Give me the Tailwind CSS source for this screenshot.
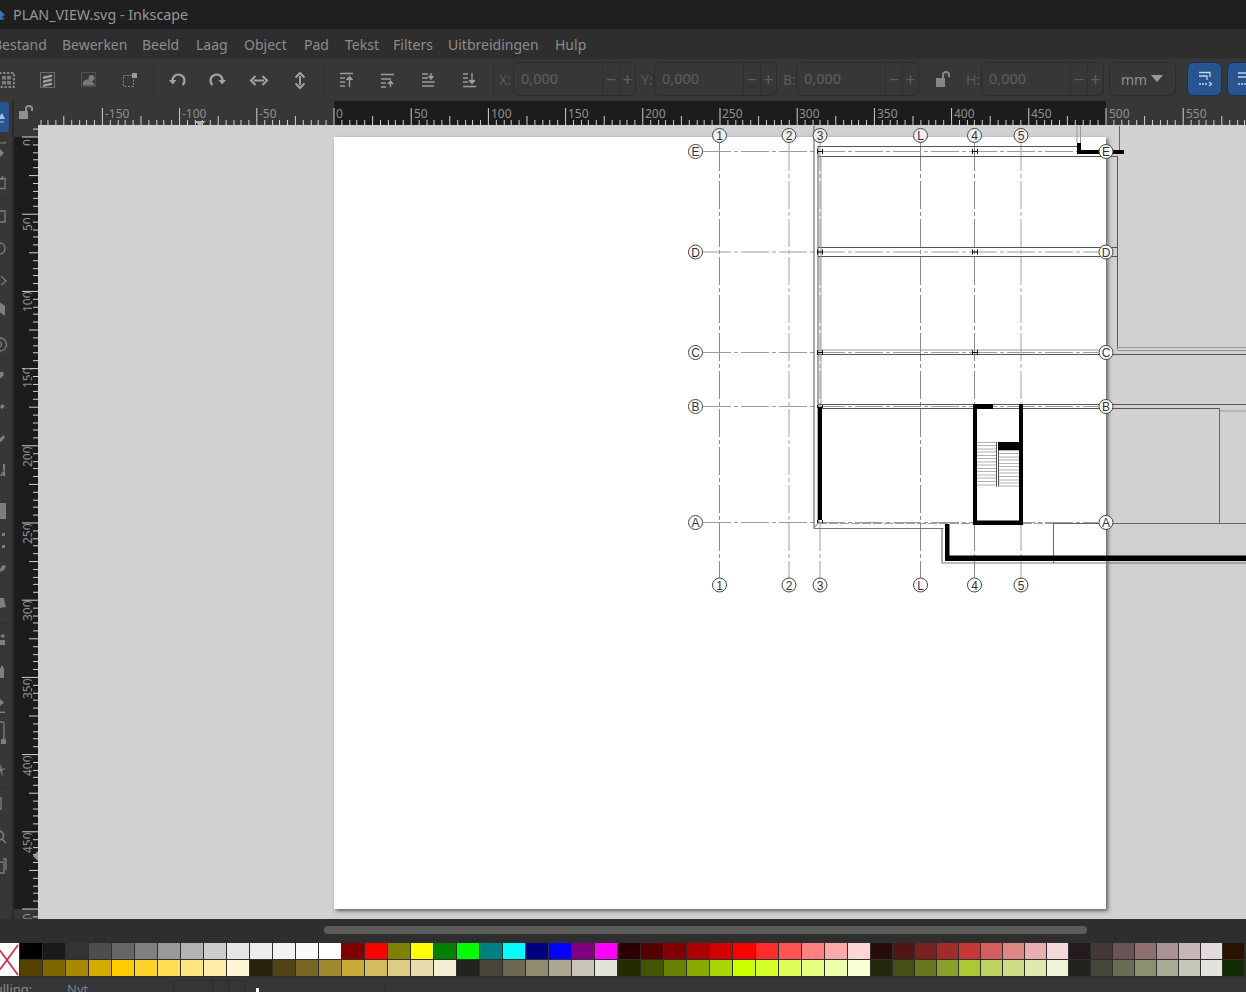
<!DOCTYPE html>
<html lang="nl"><head><meta charset="utf-8"><title>PLAN_VIEW.svg - Inkscape</title>
<script src="https://cdn.jsdelivr.net/npm/@tailwindcss/browser@4"></script></head>
<body class="m-0 bg-[#2e2e2e]">
<div class="w-[1246px] h-[992px] overflow-hidden flex flex-col font-['Noto_Sans','Open_Sans',sans-serif] text-[#8c8c8c]">

<!-- title bar -->
<div class="h-[29px] shrink-0 bg-[#1f1f1f] flex items-center relative">
  <svg class="w-[6px] h-[12px] ml-0 mt-[1px]" viewBox="0 0 6 12"><path d="M0 1 L5 6 L2 8 L5 10 L0 11Z" fill="#3f6ea8"/></svg>
  <span class="ml-[7px] mt-[2px] text-[14.300px] text-[#979797] leading-none">PLAN_VIEW.svg - Inkscape</span>
</div>

<!-- menu -->
<div class="h-[29px] shrink-0 bg-[#2e2e2e] flex items-center text-[14px] text-[#8c8c8c] leading-none pt-[2px]">
  <span class="w-[69px] shrink-0 -ml-[7px]">Bestand</span>
  <span class="w-[80px] shrink-0">Bewerken</span>
  <span class="w-[54px] shrink-0">Beeld</span>
  <span class="w-[48px] shrink-0">Laag</span>
  <span class="w-[60px] shrink-0">Object</span>
  <span class="w-[41px] shrink-0">Pad</span>
  <span class="w-[48px] shrink-0">Tekst</span>
  <span class="w-[55px] shrink-0">Filters</span>
  <span class="w-[107px] shrink-0">Uitbreidingen</span>
  <span>Hulp</span>
</div>

<!-- toolbar -->
<div class="h-[43px] shrink-0 bg-[#373737] border-t border-[#333] relative flex items-center">
  <svg class="w-[498px] h-[43px] shrink-0" viewBox="0 58 498 43" fill="none">
    <g stroke="#2f2f2f"><path d="M153.500 63V96M323.500 63V96M493.500 63V96"/></g>
    <!-- select all -->
    <rect x="-1" y="72" width="15" height="14" stroke="#a0a0a0" stroke-width="1.400" stroke-dasharray="2.500 1.500"/>
    <path d="M2 75h4v3.500h-4zM7 75h4v3.500h-4zM2 80h4v3.500h-4zM7 80h4v3.500h-4z" fill="#7d7d7d"/>
    <!-- select all layers -->
    <rect x="40.500" y="71.500" width="14" height="15" stroke="#a0a0a0" stroke-dasharray="1 1"/>
    <path d="M43 75.500L52 73.500V76L43 78ZM43 79.500L52 77.500V80L43 82ZM43 83.500L52 81.500V84L43 86Z" fill="#9d9d9d"/>
    <!-- deselect -->
    <rect x="81.500" y="71.500" width="14" height="14" stroke="#666" stroke-dasharray="1 1"/>
    <path d="M83 83a5 4 0 0 1 9-3l3 4.500H83Z" fill="#777"/><circle cx="91.500" cy="77" r="3" fill="#7a7a7a"/>
    <!-- select same -->
    <rect x="123.500" y="74.500" width="10" height="11" stroke="#8a8a8a" stroke-dasharray="2 1.500"/>
    <rect x="132" y="72" width="5" height="5" fill="#9a9a9a"/>
    <!-- rotate ccw -->
    <path d="M172.500 80a6 6 0 1 1 10 4" stroke="#a3a3a3" stroke-width="2.200"/>
    <path d="M169 79h7.500l-3.700 4.500Z" fill="#a3a3a3"/>
    <!-- rotate cw -->
    <path d="M222.500 80a6 6 0 1 0 -10 4" stroke="#a3a3a3" stroke-width="2.200"/>
    <path d="M226 79h-7.500l3.700 4.500Z" fill="#a3a3a3"/>
    <!-- flip h -->
    <path d="M254 79.500H264" stroke="#a3a3a3" stroke-width="2"/>
    <path d="M255.500 75l-4.500 4.500 4.500 4.500M262.500 75l4.500 4.500-4.500 4.500" stroke="#a3a3a3" stroke-width="2"/>
    <!-- flip v -->
    <path d="M300 75V84" stroke="#a3a3a3" stroke-width="2"/>
    <path d="M295.500 76.500l4.500-4.500 4.500 4.500M295.500 82.500l4.500 4.500 4.500-4.500" stroke="#a3a3a3" stroke-width="2"/>
    <!-- raise / lower -->
    <g stroke="#9b9b9b" stroke-width="1.400">
      <path d="M340 72.500H353M340 77H345M340 81H345M340 85H345M349.500 86V76"/>
      <path d="M346.500 79l3-3.500 3 3.500" fill="#9b9b9b"/>
      <path d="M381 73.500H394M381 78H391M381 82H386M381 86H386M390.500 86V80"/>
      <path d="M388 83l2.500-3 2.500 3" fill="#9b9b9b"/>
      <path d="M422 73H428M422 77H428M422 81H435M422 85H434M431 72V78"/>
      <path d="M428.500 75l2.500 3 2.500-3" fill="#9b9b9b"/>
      <path d="M463 73H468M463 77H468M463 81H468M463 85.500H476M472 72V82"/>
      <path d="M469 79l3 3.500 3-3.500" fill="#9b9b9b"/>
    </g>
  </svg>
  <span class="absolute left-[499px] top-[10px] text-[14px] text-[#5a5a5a]">X:</span>
  <div class="absolute left-[513px] top-[3px] w-[123px] h-[34px] rounded-[6px] border border-[#2b2b2b] flex items-center text-[14.500px] text-[#5f5f5f]">
    <span class="pl-[7px] w-[88px]">0,000</span><span class="w-[17px] h-full border-l border-[#303030] flex items-center justify-center text-[18px]">−</span><span class="flex-1 h-full border-l border-[#303030] flex items-center justify-center text-[18px]">+</span>
  </div>
  <span class="absolute left-[641px] top-[10px] text-[14px] text-[#5a5a5a]">Y:</span>
  <div class="absolute left-[654px] top-[3px] w-[123px] h-[34px] rounded-[6px] border border-[#2b2b2b] flex items-center text-[14.500px] text-[#5f5f5f]">
    <span class="pl-[7px] w-[88px]">0,000</span><span class="w-[17px] h-full border-l border-[#303030] flex items-center justify-center text-[18px]">−</span><span class="flex-1 h-full border-l border-[#303030] flex items-center justify-center text-[18px]">+</span>
  </div>
  <span class="absolute left-[783px] top-[10px] text-[14px] text-[#5a5a5a]">B:</span>
  <div class="absolute left-[796px] top-[3px] w-[123px] h-[34px] rounded-[6px] border border-[#2b2b2b] flex items-center text-[14.500px] text-[#5f5f5f]">
    <span class="pl-[7px] w-[88px]">0,000</span><span class="w-[17px] h-full border-l border-[#303030] flex items-center justify-center text-[18px]">−</span><span class="flex-1 h-full border-l border-[#303030] flex items-center justify-center text-[18px]">+</span>
  </div>
  <svg class="absolute left-[935px] top-[11px] w-[16px] h-[18px]" viewBox="0 0 16 18" fill="none"><rect x="1" y="8" width="9" height="9" fill="#858585"/><path d="M8 8V5a3 3 0 0 1 6 0v2" stroke="#858585" stroke-width="2"/></svg>
  <span class="absolute left-[966px] top-[10px] text-[14px] text-[#5a5a5a]">H:</span>
  <div class="absolute left-[981px] top-[3px] w-[123px] h-[34px] rounded-[6px] border border-[#2b2b2b] flex items-center text-[14.500px] text-[#5f5f5f]">
    <span class="pl-[7px] w-[88px]">0,000</span><span class="w-[17px] h-full border-l border-[#303030] flex items-center justify-center text-[18px]">−</span><span class="flex-1 h-full border-l border-[#303030] flex items-center justify-center text-[18px]">+</span>
  </div>
  <div class="absolute left-[1109px] top-[3px] w-[67px] h-[34px] rounded-[6px] border border-[#2b2b2b] flex items-center text-[14px] text-[#8f8f8f]">
    <span class="pl-[11px]">mm</span>
    <svg class="ml-[4px] w-[12px] h-[7px] -mt-[2px]" viewBox="0 0 12 7"><path d="M0 0H12L6 7Z" fill="#9a9a9a"/></svg>
  </div>
  <div class="absolute left-[1187px] top-[3px] w-[35px] h-[34px] rounded-[6px] bg-[#27558f] border border-[#1d2f4a] flex items-center justify-center">
    <svg class="w-[14px] h-[16px]" viewBox="0 0 14 16" fill="none" stroke="#c6d3e3" stroke-width="1.300"><path d="M1 1.500H12V6M1 5H9V9"/><path d="M1 13H10" stroke-dasharray="2 1"/><path d="M11 11l2.500 2-2.500 2" /></svg>
  </div>
  <div class="absolute left-[1227px] top-[3px] w-[35px] h-[34px] rounded-[6px] bg-[#27558f] border border-[#1d2f4a] flex items-center pl-[10px]">
    <svg class="w-[9px] h-[16px]" viewBox="0 0 9 16" fill="none" stroke="#c6d3e3" stroke-width="1.300"><path d="M0 2H9M0 6H9"/><path d="M0 13H9" stroke-dasharray="2 1"/></svg>
  </div>
</div>

<!-- workspace -->
<div class="h-[818px] shrink-0 flex bg-[#373737]">
  <!-- left toolbox, clipped by the window edge -->
  <svg class="w-[12px] h-[818px] shrink-0" viewBox="0 101 12 818" fill="none">
    <rect x="-6" y="102" width="15" height="30" rx="4" fill="#27558f"/>
    <path d="M-2 119L2 113L5 119Z" fill="#aac0dc"/><path d="M-2 122H4" stroke="#aac0dc"/>
    <g stroke="#2f2f2f"><path d="M0 198.500H12M0 358.500H12M0 623.500H12M0 787.500H12"/></g>
    <g fill="#7e7e7e" stroke="none">
      <path d="M0 143H5" stroke="#7e7e7e"/><path d="M0 149L4 153L0 157Z"/>
      <circle cx="5" cy="142.500" r="1"/>
      <path d="M-2 301L5 306V316L-2 311Z" />
      <path d="M0 372h3l1 3-3 3h-1ZM2 404l3 2-3 3-2-2ZM0 438l4-3 1 2-3 4-2 1Z"/>
      <path d="M3 464h2v12h-2ZM0 476h2l2-6v-1Z"/>
      <rect x="-1" y="503" width="7" height="16"/>
      <rect x="2" y="533" width="3" height="3"/><rect x="2" y="545" width="3" height="3"/>
      <path d="M0 569l3-4 3 1-2 4-4 2Z"/>
      <path d="M0 598h4l1 6 1 3-6 1Z"/>
      <path d="M0 636l3-2 2 2-2 2ZM0 640h5v5h-5Z"/>
      <path d="M0 668h4v10h-4ZM1 666h2v2h-2Z"/>
      <path d="M0 699l4 3.500-4 3.500ZM0 711.500H5v1.500H0Z"/>
      <rect x="1" y="739" width="5" height="5"/>
      <path d="M0 770l1-7 1 6 4-1-4 3 1 7-2-5Z"/>
    </g>
    <g stroke="#7e7e7e" stroke-width="1.300">
      <path d="M0 179H2.500V176M0 178.500H5V188.500H0"/>
      <path d="M0 211H5V222H0"/>
      <path d="M0 243A5 5.500 0 0 1 0 254"/>
      <path d="M1 276L6 281L1 285"/>
      <path d="M0 338A6 6 0 0 1 0 351M0 342A3 3 0 0 1 0 347"/>
      <path d="M0 722H2A2 2 0 0 1 4 725V739"/>
      <path d="M0 798H1V809H0"/>
      <path d="M-1 831A4 4 0 0 1 -1 840A4 4 0 0 1 -1 831M2 839L6 843" stroke-width="1.600"/>
      <path d="M0 862H4V873H0M3 859H6V870"/>
    </g>
  </svg>
  <div class="w-[2px] shrink-0 bg-[#2a2a2a]"></div>

  <div class="flex-1 grid grid-cols-[24px_1fr] grid-rows-[24px_1fr] min-w-0">
    <!-- ruler corner -->
    <div class="bg-[#373737] flex items-center justify-center">
      <svg class="w-[16px] h-[15px] mb-[1px]" viewBox="0 0 16 15" fill="none"><rect x="1" y="6" width="9" height="8" fill="#909090"/><path d="M8 6V4a3 3 0 0 1 6 0v2" stroke="#909090" stroke-width="2"/></svg>
    </div>
    <!-- horizontal ruler -->
    <svg class="w-[1208px] h-[24px] block" viewBox="38 101 1208 24" font-size="12" fill="#8f8f8f" shape-rendering="crispEdges">
      <defs>
        <pattern id="hr" patternUnits="userSpaceOnUse" x="333.500" y="101" width="77.200" height="24">
          <g stroke="#d2d2d2" fill="none">
            <path d="M.5 7V24"/><path d="M39.100 15V24"/>
            <path d="M8.200 19V24M15.900 19V24M23.700 19V24M31.400 19V24M46.800 19V24M54.500 19V24M62.300 19V24M70 19V24"/>
          </g>
        </pattern>
        <pattern id="vr" patternUnits="userSpaceOnUse" x="14" y="136.500" width="24" height="77.200">
          <g stroke="#d2d2d2" fill="none">
            <path d="M8 .5H24"/><path d="M15 39.100H24"/>
            <path d="M19 8.200H24M19 15.900H24M19 23.700H24M19 31.400H24M19 46.800H24M19 54.500H24M19 62.300H24M19 70H24"/>
          </g>
        </pattern>
      </defs>
      <rect x="38" y="101" width="1208" height="24" fill="#373737"/>
      <rect x="334" y="101" width="772" height="24" fill="#1c1c1c"/>
      <rect x="38" y="101" width="1208" height="24" fill="url(#hr)"/>
      <g shape-rendering="auto">
        <text x="105" y="118">-150</text><text x="182" y="118">-100</text><text x="259" y="118">-50</text><text x="336" y="118">0</text><text x="414" y="118">50</text><text x="491" y="118">100</text><text x="568" y="118">150</text><text x="645" y="118">200</text><text x="722" y="118">250</text><text x="799" y="118">300</text><text x="877" y="118">350</text><text x="954" y="118">400</text><text x="1031" y="118">450</text><text x="1109" y="118">500</text><text x="1186" y="118">550</text>
        <path d="M194 121H206L200 126Z" fill="#b5b5b5"/>
      </g>
    </svg>
    <!-- vertical ruler -->
    <svg class="w-[24px] h-[794px] block" viewBox="14 125 24 794" font-size="12" fill="#8f8f8f" shape-rendering="crispEdges">
      <rect x="14" y="125" width="24" height="794" fill="#373737"/>
      <rect x="14" y="137" width="24" height="772" fill="#1c1c1c"/>
      <rect x="14" y="125" width="24" height="794" fill="url(#vr)"/>
      <g shape-rendering="auto">
        <text transform="translate(31.500 146) rotate(-90)">0</text>
        <text transform="translate(31.500 231) rotate(-90)">50</text>
        <text transform="translate(31.500 312) rotate(-90)">100</text>
        <text transform="translate(31.500 388) rotate(-90)">150</text>
        <text transform="translate(31.500 467) rotate(-90)">200</text>
        <text transform="translate(31.500 544) rotate(-90)">250</text>
        <text transform="translate(31.500 621) rotate(-90)">300</text>
        <text transform="translate(31.500 699) rotate(-90)">350</text>
        <text transform="translate(31.500 776) rotate(-90)">400</text>
        <text transform="translate(31.500 853) rotate(-90)">450</text>
        <text transform="translate(31.500 934) rotate(-90)">500</text>
        <path d="M39 850V862L33 856Z" fill="#9a9a9a"/>
      </g>
      <g fill="#1c1c1c">
        <rect x="29.800" y="138" width="1.800" height="7"/>
        <rect x="29.800" y="216" width="1.800" height="7"/>
        <rect x="29.800" y="294" width="1.800" height="7"/>
        <rect x="29.800" y="370" width="1.800" height="7"/>
        <rect x="29.800" y="449" width="1.800" height="7"/>
        <rect x="29.800" y="526" width="1.800" height="7"/>
        <rect x="29.800" y="603" width="1.800" height="7"/>
        <rect x="29.800" y="681" width="1.800" height="7"/>
        <rect x="29.800" y="758" width="1.800" height="7"/>
        <rect x="29.800" y="835" width="1.800" height="7"/>
      </g>
      <rect x="29.800" y="911" width="1.800" height="7" fill="#373737"/>
    </svg>
    <!-- canvas -->
    <div class="relative bg-[#d1d1d1] overflow-hidden w-[1208px] h-[794px]">
      <div class="absolute left-[296px] top-[12px] w-[772px] h-[772px] bg-white shadow-[2px_2px_4px_rgba(0,0,0,0.55)]"></div>
      <svg class="absolute left-0 top-0 w-[1208px] h-[794px]" viewBox="38 125 1208 794" fill="none" font-family="Liberation Sans" font-size="12" text-anchor="middle">
        <!-- grid lines -->
        <g stroke="#8a8a8a" stroke-dasharray="28 3 4 3">
          <path d="M719.500 143V578M920.500 143V578M974.500 143V578"/>
        </g>
        <g stroke="#9c9c9c" stroke-dasharray="28 3 4 3">
          <path d="M703 151.500H1098M703 252H1098M703 352.500H1098M703 406.500H1098M703 522.500H1098"/>
        </g>
        <g stroke="#b5b5b5" stroke-width="1.300" stroke-dasharray="28 3 4 3">
          <path d="M789 143V578M820 143V578M1021 143V578"/>
        </g>
        <!-- beams -->
        <g stroke="#555">
          <path d="M814 126V528.500M818 146V523"/>
          <path d="M818 146.500H1077M818 156.500H1106"/>
          <path d="M818 247.500H1117M818 256.500H1117"/>
          <path d="M818 354.500H1246"/>
          <path d="M818 404.500H1246M818 408.500H1220"/>
          <path d="M1106 156.500H1117.500V349"/>
        </g>
        <g stroke="#9a9a9a">
          <path d="M821 156V404"/>
          <path d="M818 350H1106M1117 347.500H1246M1117 350.500H1246"/>
          <path d="M1220 411H1246"/>
          <path d="M818 523.500H973" stroke-dasharray="9 2"/>
          <path d="M1023 523.500H1053" stroke-dasharray="9 2"/>
          <path d="M1077 126V143M1080.500 126V143"/>
        </g>
        <path d="M814 528.500H943.500M942 529V563H1246" stroke="#777" stroke-width="1.200"/>
        <path d="M814 528L820 521" stroke="#777"/>
        <path d="M1053.500 523V563M1053 523.500H1246M1219.500 408V524M1119.500 126V150" stroke="#666"/>
        <!-- H marks -->
        <g stroke="#111" stroke-width="1">
          <path d="M817.500 149V154M822.500 149V154M817.500 151.500H822.500M972.500 149V154M977.500 149V154M972.500 151.500H977.500"/>
          <path d="M817.500 249.500V254.500M822.500 249.500V254.500M817.500 252H822.500M972.500 249.500V254.500M977.500 249.500V254.500M972.500 252H977.500"/>
          <path d="M817.500 350V355M822.500 350V355M817.500 352.500H822.500M972.500 350V355M977.500 350V355M972.500 352.500H977.500"/>
          <path d="M817.500 405V408M822.500 405V408M817.500 520V523M822.500 520V523"/>
        </g>
        <!-- stairs -->
        <path d="M977 442.500H997M977 445.500H997M977 449H997M977 452H997M977 455.500H997M977 458.500H997M977 462H997M977 465H997M977 468.500H997M977 471.500H997M977 475H997M977 478H997M977 481.500H997M977 485H997M999 450.500H1019M999 453.500H1019M999 457H1019M999 460H1019M999 463.500H1019M999 466.500H1019M999 470H1019M999 473H1019M999 476.500H1019M999 480H1019M999 483H1019M999 486H1019" stroke="#b0b0b0"/>
        <path d="M996.500 442V486.500M998.500 442V486.500" stroke="#555"/>
        <!-- thick walls -->
        <g fill="#000">
          <rect x="818" y="407" width="4" height="113"/>
          <rect x="973" y="404" width="4" height="121"/>
          <rect x="977" y="404" width="16" height="5"/>
          <rect x="1019" y="404" width="4" height="121"/>
          <rect x="977" y="520.500" width="42" height="4.500"/>
          <rect x="998" y="442" width="21" height="8"/>
          <rect x="945" y="524" width="4.500" height="37"/>
          <rect x="945" y="555.500" width="301" height="5.500"/>
          <rect x="1077" y="143" width="4" height="11"/>
          <rect x="1077" y="150" width="47" height="4"/>
        </g>
        <!-- axis bubbles -->
        <g stroke="#444" fill="#fff">
          <circle cx="695.500" cy="151.500" r="7"/><circle cx="695.500" cy="252" r="7"/><circle cx="695.500" cy="352.500" r="7"/><circle cx="695.500" cy="406.500" r="7"/><circle cx="695.500" cy="522.500" r="7"/>
          <circle cx="1106" cy="151.500" r="7"/><circle cx="1106" cy="252" r="7"/><circle cx="1106" cy="352.500" r="7"/><circle cx="1106" cy="406.500" r="7"/><circle cx="1106" cy="522.500" r="7"/>
          <circle cx="719.500" cy="585" r="7"/><circle cx="789" cy="585" r="7"/><circle cx="820" cy="585" r="7"/><circle cx="920.500" cy="585" r="7"/><circle cx="974.500" cy="585" r="7"/><circle cx="1021" cy="585" r="7"/>
        </g>
        <g stroke="#444" fill="#eeeeee">
          <circle cx="719.500" cy="135.500" r="7"/><circle cx="789" cy="135.500" r="7"/><circle cx="820" cy="135.500" r="7"/><circle cx="920.500" cy="135.500" r="7"/><circle cx="974.500" cy="135.500" r="7"/><circle cx="1021" cy="135.500" r="7"/>
        </g>
        <g fill="#333">
          <text x="695.500" y="156">E</text><text x="695.500" y="256.500">D</text><text x="695.500" y="357">C</text><text x="695.500" y="411">B</text><text x="695.500" y="527">A</text>
          <text x="1106" y="156">E</text><text x="1106" y="256.500">D</text><text x="1106" y="357">C</text><text x="1106" y="411">B</text><text x="1106" y="527">A</text>
          <text x="719.500" y="140">1</text><text x="789" y="140">2</text><text x="820" y="140">3</text><text x="920.500" y="140">L</text><text x="974.500" y="140">4</text><text x="1021" y="140">5</text>
          <text x="719.500" y="589.500">1</text><text x="789" y="589.500">2</text><text x="820" y="589.500">3</text><text x="920.500" y="589.500">L</text><text x="974.500" y="589.500">4</text><text x="1021" y="589.500">5</text>
        </g>
      </svg>
    </div>
  </div>
</div>

<!-- scrollbar strip -->
<div class="h-[23px] shrink-0 bg-[#2e2e2e] pl-[324px] pt-[7px]">
  <div class="w-[763px] h-[8px] rounded-full bg-[#5c5c5a]"></div>
</div>

<!-- palette -->
<div class="h-[35px] shrink-0 bg-[#2e2e2e] flex pt-[1px]">
  <svg class="w-[19px] h-[33px] shrink-0 bg-white" viewBox="0 0 19 33" fill="none"><path d="M18 2L0 26.500M18 32L0 7.500" stroke="#c5344a" stroke-width="1.800"/></svg>
  <div class="ml-[1px] grid grid-cols-[repeat(37,23px)_repeat(17,22px)] grid-rows-[16px_16px] gap-y-[1px] [&>i]:mr-[1px]">
    <i class="bg-[#000000]"></i><i class="bg-[#1a1a1a]"></i><i class="bg-[#333333]"></i><i class="bg-[#4d4d4d]"></i><i class="bg-[#666666]"></i><i class="bg-[#808080]"></i><i class="bg-[#999999]"></i><i class="bg-[#b3b3b3]"></i><i class="bg-[#cccccc]"></i><i class="bg-[#e6e6e6]"></i><i class="bg-[#ececec]"></i><i class="bg-[#f2f2f2]"></i><i class="bg-[#f9f9f9]"></i><i class="bg-[#ffffff]"></i><i class="bg-[#800000]"></i><i class="bg-[#ff0000]"></i><i class="bg-[#808000]"></i><i class="bg-[#ffff00]"></i><i class="bg-[#008000]"></i><i class="bg-[#00ff00]"></i><i class="bg-[#008080]"></i><i class="bg-[#00ffff]"></i><i class="bg-[#000080]"></i><i class="bg-[#0000ff]"></i><i class="bg-[#800080]"></i><i class="bg-[#ff00ff]"></i>
    <i class="bg-[#2b0000]"></i><i class="bg-[#550000]"></i><i class="bg-[#800000]"></i><i class="bg-[#aa0000]"></i><i class="bg-[#d40000]"></i><i class="bg-[#ff0000]"></i><i class="bg-[#ff2a2a]"></i><i class="bg-[#ff5555]"></i><i class="bg-[#ff8080]"></i><i class="bg-[#ffaaaa]"></i><i class="bg-[#ffd5d5]"></i><i class="bg-[#280b0b]"></i><i class="bg-[#501616]"></i><i class="bg-[#782121]"></i><i class="bg-[#a02c2c]"></i><i class="bg-[#c83737]"></i><i class="bg-[#d35f5f]"></i><i class="bg-[#de8787]"></i><i class="bg-[#e9afaf]"></i><i class="bg-[#f4d7d7]"></i><i class="bg-[#241c1c]"></i><i class="bg-[#483737]"></i><i class="bg-[#6c5353]"></i><i class="bg-[#917070]"></i><i class="bg-[#ac9393]"></i><i class="bg-[#c8b7b7]"></i><i class="bg-[#e3dbdb]"></i><i class="bg-[#2b1100]"></i>
    <i class="bg-[#554400]"></i><i class="bg-[#806600]"></i><i class="bg-[#aa8800]"></i><i class="bg-[#d4aa00]"></i><i class="bg-[#ffcc00]"></i><i class="bg-[#ffd42a]"></i><i class="bg-[#ffdd55]"></i><i class="bg-[#ffe680]"></i><i class="bg-[#ffeeaa]"></i><i class="bg-[#fff6d5]"></i><i class="bg-[#28220b]"></i><i class="bg-[#504416]"></i><i class="bg-[#786721]"></i><i class="bg-[#a0892c]"></i><i class="bg-[#c8ab37]"></i><i class="bg-[#d3bc5f]"></i><i class="bg-[#decd87]"></i><i class="bg-[#e9ddaf]"></i><i class="bg-[#f4eed7]"></i><i class="bg-[#24221c]"></i><i class="bg-[#484537]"></i><i class="bg-[#6c6753]"></i><i class="bg-[#918a6f]"></i><i class="bg-[#aca793]"></i><i class="bg-[#c8c4b7]"></i><i class="bg-[#e3e2db]"></i>
    <i class="bg-[#222b00]"></i><i class="bg-[#445500]"></i><i class="bg-[#668000]"></i><i class="bg-[#88aa00]"></i><i class="bg-[#aad400]"></i><i class="bg-[#ccff00]"></i><i class="bg-[#d4ff2a]"></i><i class="bg-[#ddff55]"></i><i class="bg-[#e5ff80]"></i><i class="bg-[#eeffaa]"></i><i class="bg-[#f6ffd5]"></i><i class="bg-[#22280b]"></i><i class="bg-[#445016]"></i><i class="bg-[#677821]"></i><i class="bg-[#89a02c]"></i><i class="bg-[#abc837]"></i><i class="bg-[#bcd35f]"></i><i class="bg-[#cdde87]"></i><i class="bg-[#dde9af]"></i><i class="bg-[#eef4d7]"></i><i class="bg-[#22241c]"></i><i class="bg-[#454837]"></i><i class="bg-[#676c53]"></i><i class="bg-[#8a9170]"></i><i class="bg-[#a7ac93]"></i><i class="bg-[#c4c8b7]"></i><i class="bg-[#e2e3db]"></i><i class="bg-[#112b00]"></i>
  </div>
</div>

<!-- status bar -->
<div class="flex-1 bg-[#363636] flex items-start text-[13px] leading-none relative">
  <span class="pt-[6px] -ml-[13px] w-[80px] shrink-0 text-[#8c8c8c]">Vulling:</span>
  <span class="pt-[6px] w-[106px] shrink-0 text-[#6f7f95]">Nvt</span>
  <div class="mt-[3px] w-[72px] h-[24px] rounded-[5px] border border-[#2b2b2b] flex shrink-0">
    <span class="w-[38px]"></span><span class="w-[16px] border-l border-[#2b2b2b]"></span><span class="flex-1 border-l border-[#2b2b2b]"></span>
  </div>
  <div class="ml-[11px] mt-[11px] w-[3px] h-[8px] bg-white shrink-0"></div>
  <div class="ml-[125px] mt-[9px] w-[1px] h-[10px] bg-[#2e2e2e] shrink-0"></div>
</div>

</div>
</body></html>
